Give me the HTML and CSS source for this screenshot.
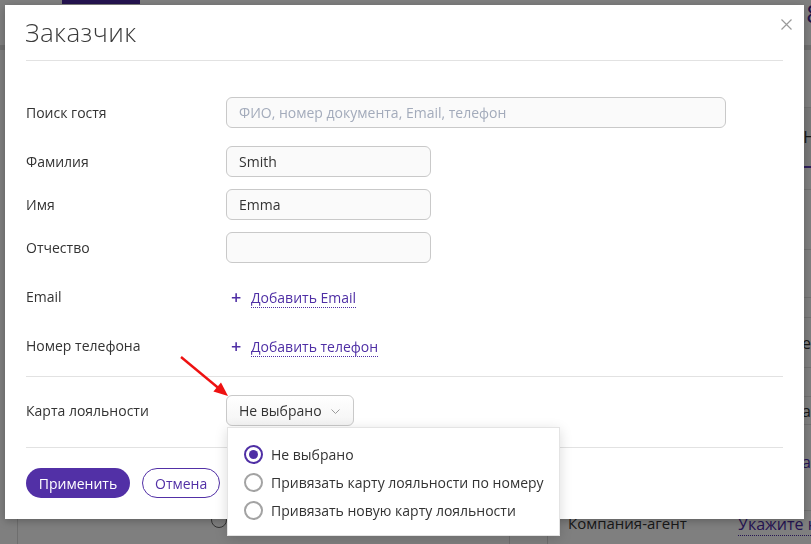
FILE: index.html
```html
<!DOCTYPE html>
<html lang="ru">
<head>
    <meta charset="UTF-8">
    <meta name="viewport" content="width=device-width, initial-scale=1.0">
    <title>Заказчик</title>
    <link rel="stylesheet" href="styles.css">
</head>
<body>

    <!-- Page behind the dialog -->
    <div class="page">
        <header class="page-top">
            <span class="page-tab"></span>
            <span class="page-num">8</span>
        </header>
        <div class="page-body">
            <section class="page-main">
                <div class="main-fill"></div>
                <div class="main-row">
                    <span class="main-icon"></span>
                    <span class="main-divider"></span>
                </div>
            </section>
            <aside class="page-side">
                <div class="side-row row-h58"></div>
                <div class="side-row side-tab row-h60">Н</div>
                <div class="side-row row-h22"></div>
                <div class="side-row row-h60"></div>
                <div class="side-row row-h48"></div>
                <div class="side-row row-h20"></div>
                <div class="side-row row-h50">е</div>
                <div class="side-row row-h29"></div>
                <div class="side-row row-h28">а</div>
                <div class="side-row side-link row-h86">а</div>
                <div class="side-last">
                    <span class="side-label">Компания-агент</span>
                    <span class="side-value">Укажите на</span>
                </div>
            </aside>
        </div>
    </div>

    <div class="overlay"></div>

    <!-- Dialog -->
    <div class="modal">
        <div class="modal-head">
            <h1 class="modal-title">Заказчик</h1>
        </div>
        <svg class="modal-close" width="11" height="11" viewBox="0 0 11 11">
            <path d="M0.5 0.5 L10.5 10.5 M10.5 0.5 L0.5 10.5" stroke="#9a9a9a" stroke-width="1.2" fill="none"/>
        </svg>

        <div class="form">
            <div class="row row-search">
                <span class="label">Поиск гостя</span>
                <input type="text" class="input-field input-wide" placeholder="ФИО, номер документа, Email, телефон">
            </div>
            <div class="row row-gap18">
                <span class="label">Фамилия</span>
                <input type="text" class="input-field" value="Smith">
            </div>
            <div class="row row-gap12">
                <span class="label">Имя</span>
                <input type="text" class="input-field" value="Emma">
            </div>
            <div class="row row-gap12">
                <span class="label">Отчество</span>
                <input type="text" class="input-field">
            </div>
            <div class="row row-gap18">
                <span class="label">Email</span>
                <a class="add-link"><span class="plus">+</span><span class="dotted">Добавить Email</span></a>
            </div>
            <div class="row row-gap18">
                <span class="label">Номер телефона</span>
                <a class="add-link"><span class="plus">+</span><span class="dotted">Добавить телефон</span></a>
            </div>
        </div>

        <div class="section">
            <div class="row">
                <span class="label">Карта лояльности</span>
                <div class="dropdown">
                    <button class="dropdown-btn">Не выбрано
                        <svg class="chevron" width="9" height="5" viewBox="0 0 9 5">
                            <path d="M0.5 0.5 L4.5 4.5 L8.5 0.5" stroke="#9a9a9a" stroke-width="1" fill="none"/>
                        </svg>
                    </button>
                    <div class="dropdown-menu">
                        <label class="option"><span class="radio radio-on"></span>Не выбрано</label>
                        <label class="option"><span class="radio"></span>Привязать карту лояльности по номеру</label>
                        <label class="option"><span class="radio"></span>Привязать новую карту лояльности</label>
                    </div>
                </div>
            </div>
        </div>

        <div class="modal-foot">
            <button class="btn btn-primary">Применить</button>
            <button class="btn btn-outline">Отмена</button>
        </div>

        <!-- red pointer -->
        <svg class="pointer" width="60" height="55" viewBox="0 0 60 55">
            <line x1="6" y1="7" x2="44" y2="38.5" stroke="#ee1111" stroke-width="2.4"/>
            <polygon points="53,46 38.4,41.6 46,32.4" fill="#ee1111"/>
        </svg>
    </div>

</body>
</html>
```

FILE: styles.css
```css
body {
    margin: 0;
    font-family: "Open Sans", Arial, sans-serif;
    font-size: 14px;
    color: #333;
    background: #fff;
}
/* Background page */
.page {
    height: 544px;
    overflow: hidden;
    display: flex;
    flex-direction: column;
}
.page-top {
    height: 45px;
    flex: none;
    display: flex;
    align-items: flex-start;
    padding-left: 62px;
    border-bottom: 5px solid #dcdcdc;
}
.page-tab {
    width: 78px;
    height: 4px;
    background: #4a28a0;
}
.page-num {
    margin-left: auto;
    margin-right: -10px;
    font-size: 26px;
    line-height: 26px;
    color: #3f2290;
}
.page-body {
    flex: 1;
    display: flex;
}
.page-main {
    width: 529px;
    flex: none;
    margin-left: 17px;
    border-left: 1px solid #ddd;
    display: flex;
    flex-direction: column;
}
.main-fill {
    flex: 1;
}
.main-row {
    height: 32px;
    display: flex;
    align-items: flex-start;
}
.main-icon {
    width: 14px;
    height: 14px;
    border: 1px solid #666;
    border-radius: 50%;
    margin-left: 193px;
}
.main-divider {
    margin-left: 282px;
    width: 1px;
    height: 32px;
    background: #ddd;
}
.page-side {
    flex: 1;
    min-width: 0;
    border-left: 1px solid #ddd;
    display: flex;
    flex-direction: column;
}
.side-row {
    border-bottom: 1px solid #e2e2e2;
    box-sizing: border-box;
    display: flex;
    align-items: center;
    justify-content: flex-end;
    font-size: 16px;
    color: #333;
}
.row-h58 { height: 58px; }
.row-h60 { height: 60px; }
.row-h22 { height: 22px; }
.row-h48 { height: 48px; }
.row-h20 { height: 20px; }
.row-h50 { height: 50px; }
.row-h29 { height: 29px; }
.row-h28 { height: 28px; }
.row-h86 { height: 86px; }
.side-tab {
    background: #f2f2f2;
    border-bottom: 2px solid #5a3bb5;
    margin-right: -4px;
}
.side-link {
    color: #4b2aa8;
    align-items: flex-start;
    padding-top: 26px;
}
.side-last {
    flex: 1;
    display: flex;
    align-items: flex-start;
    padding-top: 2px;
    padding-left: 20px;
    white-space: nowrap;
    overflow: hidden;
}
.side-label {
    width: 170px;
    flex: none;
    color: #333;
    font-size: 15px;
}
.side-value {
    color: #4b2aa8;
    border-bottom: 1px dotted #4b2aa8;
    font-size: 16px;
}
.overlay {
    position: fixed;
    top: 0;
    left: 0;
    right: 0;
    bottom: 0;
    background: rgba(0, 0, 0, 0.5);
}
/* Dialog */
.modal {
    position: absolute;
    left: 5px;
    top: 5px;
    width: 799px;
    height: 514px;
    box-sizing: border-box;
    padding: 0 21px;
    background: #fff;
    box-shadow: 0 2px 8px rgba(0, 0, 0, 0.25);
}
.modal-head {
    height: 56px;
    box-sizing: border-box;
    border-bottom: 1px solid #e2e2e2;
    display: flex;
    align-items: center;
}
.modal-title {
    margin: 0 0 0 -1px;
    padding-bottom: 1px;
    font-size: 26px;
    font-weight: 300;
    color: #3a3a3a;
    letter-spacing: 0.4px;
}
.modal-close {
    position: absolute;
    right: 12px;
    top: 14px;
}
.form {
    padding-top: 36px;
    padding-bottom: 15px;
    border-bottom: 1px solid #e2e2e2;
}
.row {
    display: flex;
    align-items: center;
    min-height: 31px;
}
.row-gap18 { margin-top: 18px; }
.row-gap12 { margin-top: 12px; }
.label {
    width: 200px;
    flex: none;
    color: #333;
    margin-top: -1px;
}
.input-field {
    width: 205px;
    height: 31px;
    box-sizing: border-box;
    padding: 0 12px;
    border: 1px solid #c9c9c9;
    border-radius: 6px;
    background: #fafafa;
    font-family: inherit;
    font-size: 14px;
    color: #333;
    outline: none;
}
.input-wide {
    width: 500px;
}
.input-field::placeholder {
    color: #a3abbb;
}
.add-link {
    margin-left: 5px;
    display: flex;
    align-items: center;
    color: #4f2fa5;
    cursor: pointer;
}
.plus {
    width: 20px;
    font-size: 18px;
    line-height: 18px;
    font-weight: 600;
}
.dotted {
    border-bottom: 1px dotted #4f2fa5;
    line-height: 18px;
    margin-top: 4px;
}
.section {
    padding: 18px 0 21px;
    border-bottom: 1px solid #e2e2e2;
}
.dropdown {
    position: relative;
}
.dropdown-btn {
    width: 128px;
    height: 31px;
    box-sizing: border-box;
    padding: 0 0 0 12px;
    border: 1px solid #c9c9c9;
    border-radius: 6px;
    background: linear-gradient(#fff, #f4f4f4);
    font-family: inherit;
    font-size: 14px;
    color: #333;
    display: flex;
    align-items: center;
    text-align: left;
}
.chevron {
    margin-left: 9px;
    margin-top: 1px;
}
.dropdown-menu {
    position: absolute;
    left: 1px;
    top: 32px;
    width: 333px;
    height: 109px;
    box-sizing: border-box;
    padding: 12px 0 0 16px;
    background: #fff;
    border: 1px solid #e4e4e4;
    box-shadow: 0 3px 12px rgba(0, 0, 0, 0.15);
    z-index: 2;
}
.option {
    height: 28px;
    display: flex;
    align-items: center;
    white-space: nowrap;
    color: #333;
}
.radio {
    width: 19px;
    height: 19px;
    box-sizing: border-box;
    border: 2px solid #a3a3a3;
    border-radius: 50%;
    margin-right: 8px;
    flex: none;
    position: relative;
}
.radio-on {
    border-color: #4f2fa5;
}
.radio-on::after {
    content: "";
    position: absolute;
    left: 3px;
    top: 3px;
    width: 9px;
    height: 9px;
    border-radius: 50%;
    background: #4f2fa5;
}
.modal-foot {
    padding-top: 20px;
    display: flex;
    gap: 12px;
}
.btn {
    height: 30px;
    border-radius: 15px;
    font-family: inherit;
    font-size: 14px;
    padding: 0 12px;
    cursor: pointer;
}
.btn-primary {
    width: 104px;
    border: none;
    background: #5230a6;
    color: #fff;
}
.btn-outline {
    width: 78px;
    border: 1px solid #5230a6;
    background: #fff;
    color: #5230a6;
}
.pointer {
    position: absolute;
    left: 170px;
    top: 345px;
}
```
